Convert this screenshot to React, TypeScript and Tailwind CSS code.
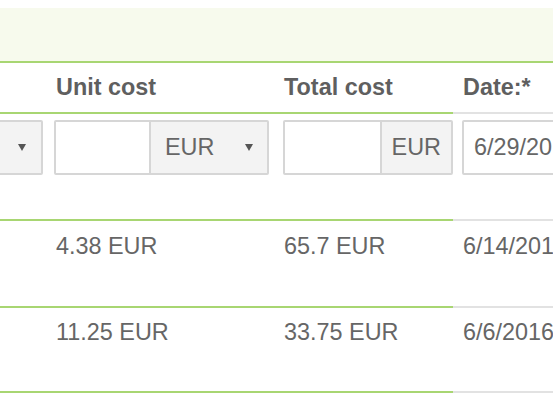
const font = { fontFamily: '"Liberation Sans", Arial, sans-serif' };

function Caret() {
  return (
    <svg width="8" height="7" viewBox="0 0 8 7" className="shrink-0">
      <polygon points="0,0 8,0 4,7" fill="#555" />
    </svg>
  );
}

const green = 'border-b-2 border-[#a8d672]';
const gray = 'border-b-2 border-[#e2e2e2]';

const rows = [
  { unit: '4.38 EUR', total: '65.7 EUR', date: '6/14/2016', h: 'h-[87px] pt-[8px]' },
  { unit: '11.25 EUR', total: '33.75 EUR', date: '6/6/2016', h: 'h-[85px] pt-[7px]' },
];

export default function App() {
  return (
    <div className="h-[400px] w-[553px] overflow-hidden bg-white text-[23.4px] text-[#666]" style={font}>
      <div className="mt-[8px] h-[55px] border-b-2 border-[#a8d672] bg-[#f7faed]" />

      <div className="-ml-[155px] grid w-[840px] grid-cols-[200px_229px_179px_232px]">
        {/* header */}
        <div className={`h-[51px] ${green}`} />
        <div className={`flex h-[51px] items-center pl-[11px] font-bold text-[#5f5f5f] ${green}`}>Unit cost</div>
        <div className={`flex h-[51px] items-center pl-[10px] font-bold text-[#5f5f5f] ${green}`}>Total cost</div>
        <div className={`flex h-[51px] items-center pl-[10px] font-bold text-[#5f5f5f] ${gray}`}>Date:*</div>

        {/* input row */}
        <div className={`h-[107px] pt-[6px] pr-[2px] ${green}`}>
          <div className="flex h-[55px] items-center justify-end rounded-[2px] border-2 border-[#d6d6d6] bg-[#f3f3f3] pr-[15px]">
            <Caret />
          </div>
        </div>
        <div className={`h-[107px] pt-[6px] pl-[9px] ${green}`}>
          <div className="flex h-[55px] w-[215px]">
            <div className="w-[97px] rounded-l-[2px] border-2 border-[#d6d6d6] bg-white" />
            <div className="-ml-[2px] flex flex-1 items-center justify-between rounded-r-[2px] border-2 border-[#d6d6d6] bg-[#f3f3f3] pl-[14px] pr-[14px]">
              <span>EUR</span>
              <Caret />
            </div>
          </div>
        </div>
        <div className={`h-[107px] pt-[6px] pl-[9px] ${green}`}>
          <div className="flex h-[55px] w-[170px]">
            <div className="w-[99px] rounded-l-[2px] border-2 border-[#d6d6d6] bg-white" />
            <div className="-ml-[2px] flex flex-1 items-center justify-end rounded-r-[2px] border-2 border-[#d6d6d6] bg-[#f3f3f3] pr-[10px]">
              EUR
            </div>
          </div>
        </div>
        <div className={`h-[107px] pt-[6px] pl-[9px] ${gray}`}>
          <div className="flex h-[55px] items-center rounded-[2px] border-2 border-[#d6d6d6] bg-white pl-[10px]">
            6/29/2016
          </div>
        </div>

        {rows.map((r) => (
          <div key={r.date} className="contents">
            <div className={`${r.h} ${green}`} />
            <div className={`${r.h} pl-[11px] ${green}`}>{r.unit}</div>
            <div className={`${r.h} pl-[10px] ${green}`}>{r.total}</div>
            <div className={`${r.h} pl-[10px] ${gray}`}>{r.date}</div>
          </div>
        ))}
      </div>
    </div>
  );
}
